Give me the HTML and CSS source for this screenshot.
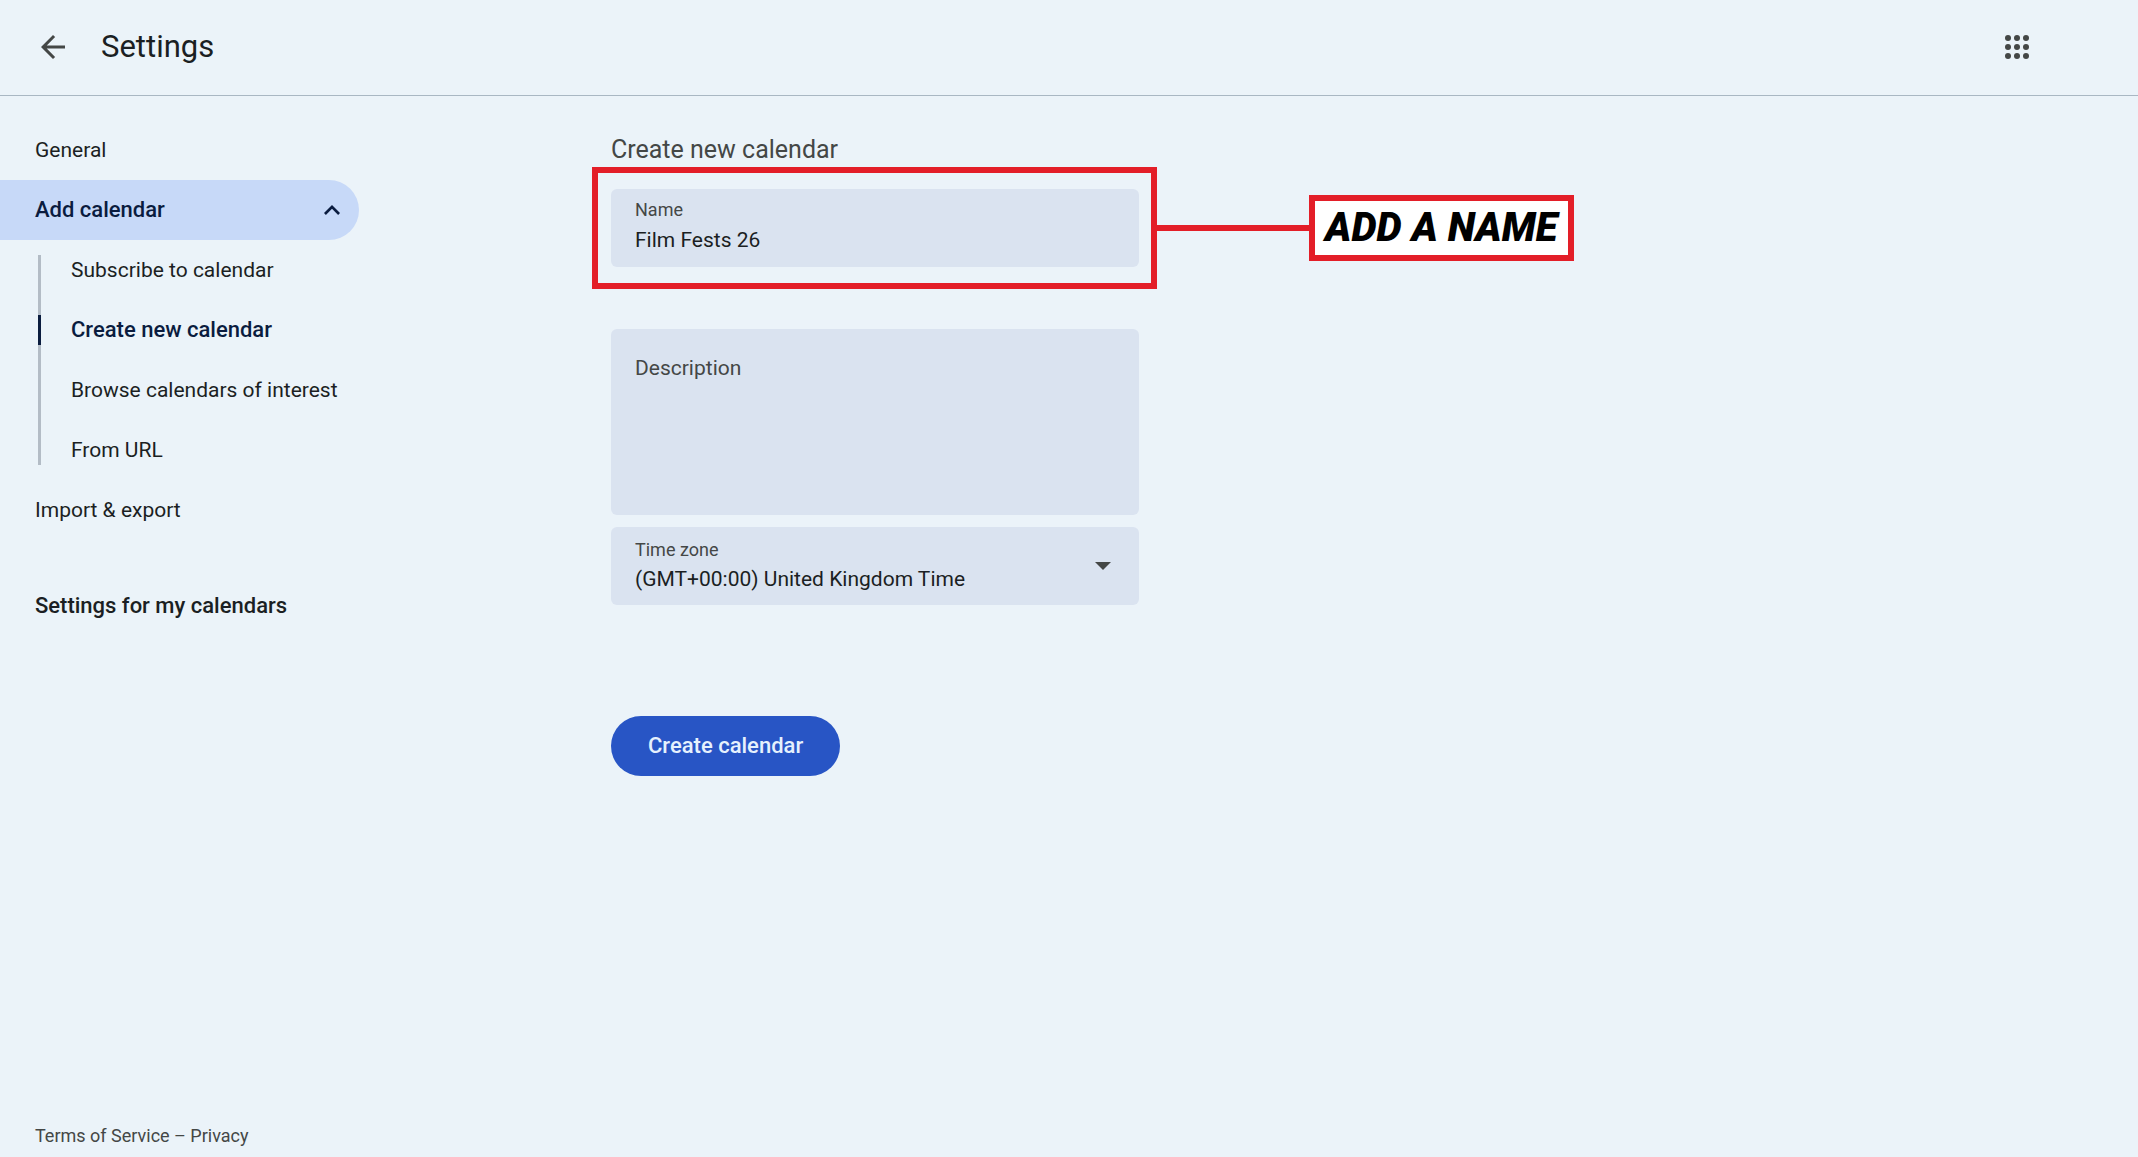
FILE: index.html
```html
<!DOCTYPE html>
<html lang="en">
<head>
    <meta charset="UTF-8">
    <meta name="viewport" content="width=device-width, initial-scale=1.0">
    <title>Settings</title>
    <link rel="stylesheet" href="styles.css">
</head>
<body>

<header class="topbar">
    <button type="button" class="icon-button" aria-label="Go back">
        <svg width="36" height="36" viewBox="0 0 24 24" fill="currentColor"><path d="M20 11H7.83l5.59-5.59L12 4l-8 8 8 8 1.41-1.41L7.83 13H20v-2z"/></svg>
    </button>
    <h1>Settings</h1>
    <button type="button" class="icon-button apps" aria-label="Google apps">
        <svg width="36" height="36" viewBox="0 0 24 24" fill="currentColor">
            <circle cx="6" cy="6" r="2"/><circle cx="12" cy="6" r="2"/><circle cx="18" cy="6" r="2"/>
            <circle cx="6" cy="12" r="2"/><circle cx="12" cy="12" r="2"/><circle cx="18" cy="12" r="2"/>
            <circle cx="6" cy="18" r="2"/><circle cx="12" cy="18" r="2"/><circle cx="18" cy="18" r="2"/>
        </svg>
    </button>
</header>

<div class="layout">
    <aside class="sidebar">
        <nav>
            <a class="nav-item" href="#general">General</a>
            <button type="button" class="nav-item nav-toggle" aria-expanded="true">
                Add calendar
                <svg width="30" height="30" viewBox="0 0 24 24" fill="currentColor"><path d="M12 8l-6.4 6.4 1.5 1.5L12 11l4.9 4.9 1.5-1.5z"/></svg>
            </button>
            <div class="subnav">
                <a class="nav-item" href="#subscribe">Subscribe to calendar</a>
                <a class="nav-item active" href="#create">Create new calendar</a>
                <a class="nav-item" href="#browse">Browse calendars of interest</a>
                <a class="nav-item" href="#url">From URL</a>
            </div>
            <a class="nav-item" href="#import">Import &amp; export</a>
        </nav>
        <h2>Settings for my calendars</h2>
        <footer><a href="#terms">Terms of Service</a> – <a href="#privacy">Privacy</a></footer>
    </aside>

    <main>
        <form>
            <h2>Create new calendar</h2>
            <div class="field name-field">
                <label for="name">Name</label>
                <input type="text" id="name" name="name" value="Film Fests 26">
                <div class="highlight"></div>
                <div class="callout">
                    <span class="connector"></span>
                    <strong>ADD A NAME</strong>
                </div>
            </div>
            <div class="field description-field">
                <label for="description">Description</label>
                <textarea id="description" name="description"></textarea>
            </div>
            <div class="field timezone-field">
                <label for="timezone">Time zone</label>
                <select id="timezone" name="timezone">
                    <option>(GMT+00:00) United Kingdom Time</option>
                </select>
                <svg class="arrow" width="16" height="8" viewBox="0 0 16 8" fill="currentColor"><path d="M0 0h16L8 8z"/></svg>
            </div>
            <button type="submit" class="submit">Create calendar</button>
        </form>
    </main>
</div>

</body>
</html>
```
FILE: styles.css
```css
* {
    box-sizing: border-box;
}
body {
    display: flex;
    flex-direction: column;
    min-height: 100vh;
    margin: 0;
    font-family: Roboto, Arial, sans-serif;
    font-size: 21px;
    line-height: 30px;
    color: #1b1f23;
    background-color: #ebf3f9;
}
h1, h2 {
    margin: 0;
    font-weight: 400;
}
a {
    color: inherit;
    text-decoration: none;
}
button, input, select, textarea {
    padding: 0;
    border: 0;
    font: inherit;
    color: inherit;
    background: none;
}
button {
    cursor: pointer;
}

/* Top bar */
.topbar {
    display: flex;
    align-items: center;
    height: 96px;
    padding: 0 103px 2px 35px;
    border-bottom: 1px solid #a9b7c3;
}
.topbar h1 {
    margin-left: 30px;
    font-size: 31px;
    line-height: 36px;
}
.icon-button {
    display: flex;
    color: #444746;
}
.apps {
    margin-left: auto;
}

/* Sidebar */
.layout {
    display: flex;
    flex: 1;
}
.sidebar {
    display: flex;
    flex-direction: column;
    flex: 0 0 611px;
    padding: 24px 0 6px;
}
.nav-item {
    display: flex;
    align-items: center;
    height: 60px;
    padding-left: 35px;
}
.nav-toggle {
    justify-content: space-between;
    width: 359px;
    padding-right: 12px;
    border-radius: 0 30px 30px 0;
    font-size: 22px;
    font-weight: 500;
    color: #0a1c3f;
    background-color: #c7d9f8;
}
.subnav {
    position: relative;
}
.subnav::before {
    content: "";
    position: absolute;
    top: 15px;
    bottom: 15px;
    left: 38px;
    width: 3px;
    background-color: #b3bcc6;
}
.subnav .nav-item {
    position: relative;
    padding-left: 71px;
}
.subnav .active {
    font-size: 22px;
    font-weight: 500;
    color: #0a1c3f;
}
.subnav .active::before {
    content: "";
    position: absolute;
    top: 15px;
    bottom: 15px;
    left: 38px;
    width: 3px;
    background-color: #0a1c3f;
}
.sidebar h2 {
    margin-top: 51px;
    padding-left: 35px;
    font-size: 22px;
    font-weight: 500;
}
.sidebar footer {
    margin-top: auto;
    padding-left: 35px;
    font-size: 18px;
    color: #444746;
}

/* Form */
main {
    flex: 1;
    padding-top: 39px;
}
form {
    max-width: 528px;
}
form h2 {
    margin-bottom: 24px;
    font-size: 25px;
    color: #444746;
}
.field {
    position: relative;
    display: flex;
    flex-direction: column;
    padding: 6px 24px 12px;
    border-radius: 6px;
    background-color: #dae3f0;
}
.field label {
    font-size: 18px;
    color: #444746;
}
.field input, .field select {
    height: 30px;
    outline: none;
    appearance: none;
}
.name-field {
    margin-bottom: 62px;
}
.description-field {
    margin-bottom: 12px;
    padding-top: 24px;
}
.description-field label {
    font-size: 21px;
}
.description-field textarea {
    height: 120px;
    outline: none;
    resize: none;
}
.timezone-field {
    padding-top: 9px;
}
.timezone-field label {
    line-height: 28px;
}
.timezone-field select {
    height: 29px;
}
.arrow {
    position: absolute;
    top: 35px;
    right: 28px;
    color: #444746;
    pointer-events: none;
}
.submit {
    height: 60px;
    margin-top: 111px;
    padding: 0 37px;
    border-radius: 30px;
    font-size: 22px;
    font-weight: 500;
    color: #e6f1fd;
    background-color: #2855c5;
}

/* Annotation over the name field */
.highlight {
    position: absolute;
    inset: -22px -18px -22px -19px;
    border: 6px solid #e31e28;
    pointer-events: none;
}
.callout {
    position: absolute;
    top: 6px;
    left: calc(100% + 18px);
    display: flex;
    align-items: center;
}
.connector {
    width: 152px;
    height: 6px;
    background-color: #e31e28;
}
.callout strong {
    padding: 0 10px;
    border: 6px solid #e31e28;
    font-size: 40px;
    font-style: italic;
    font-weight: 900;
    line-height: 54px;
    white-space: nowrap;
    color: #000;
    background-color: #fff;
}
```
